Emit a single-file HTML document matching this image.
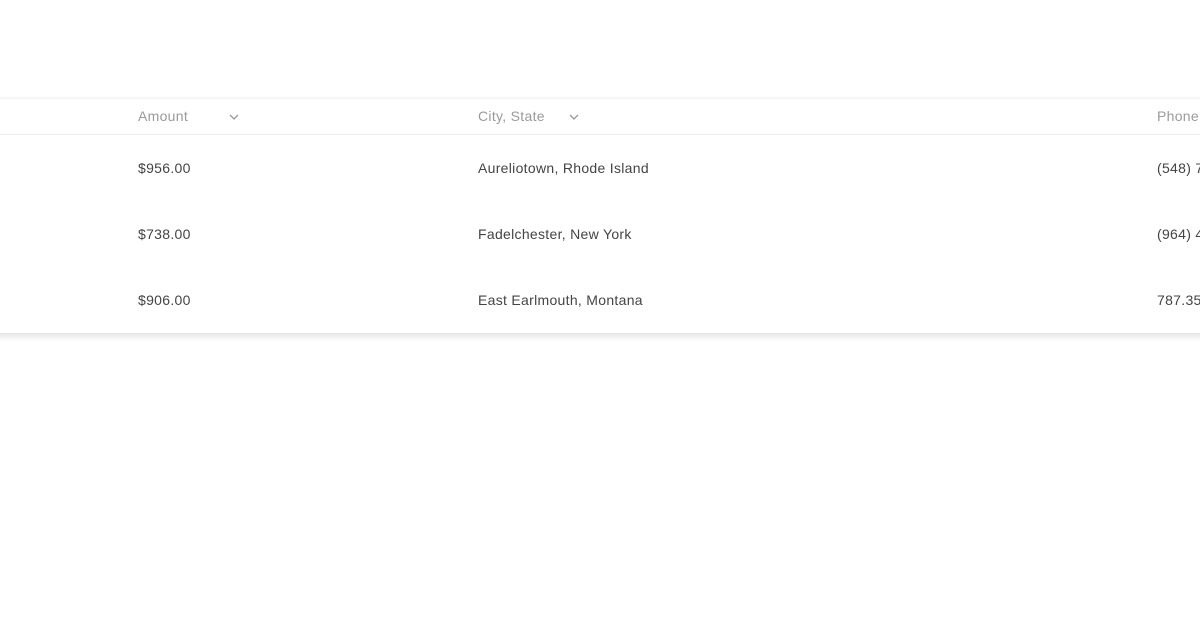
<!DOCTYPE html>
<html><head><style>
body{margin:0;width:1200px;height:630px;background:#fff;overflow:hidden;font-family:"Liberation Sans",sans-serif;position:relative}
.card{position:absolute;left:-10px;top:99px;width:1300px;height:234px;background:#fff;box-shadow:0 3px 7px rgba(0,0,0,.13),0 -1px 3px rgba(0,0,0,.04)}
.hdr{position:absolute;left:0;top:0;width:100%;height:35px;border-bottom:1px solid #ececec}
.t{position:absolute;font-size:14px;white-space:nowrap;line-height:16px;letter-spacing:0.3px}
.h{color:#9a9a9a;top:9px}
.b{color:#444}
svg{position:absolute}
</style></head><body>
<div class="card">
<div class="hdr">
<span class="t h" style="left:148px">Amount</span>
<svg style="left:238px;top:14px" width="12" height="8" viewBox="0 0 12 8"><path d="M2 2l4 4 4-4" fill="none" stroke="#999" stroke-width="1.3"/></svg>
<span class="t h" style="left:488px">City, State</span>
<svg style="left:578px;top:14px" width="12" height="8" viewBox="0 0 12 8"><path d="M2 2l4 4 4-4" fill="none" stroke="#999" stroke-width="1.3"/></svg>
<span class="t h" style="left:1167px">Phone</span>
</div>
<span class="t b" style="left:148px;top:61px">$956.00</span>
<span class="t b" style="left:488px;top:61px">Aureliotown, Rhode Island</span>
<span class="t b" style="left:1167px;top:61px">(548) 7</span>
<span class="t b" style="left:148px;top:127px">$738.00</span>
<span class="t b" style="left:488px;top:127px">Fadelchester, New York</span>
<span class="t b" style="left:1167px;top:127px">(964) 4</span>
<span class="t b" style="left:148px;top:193px">$906.00</span>
<span class="t b" style="left:488px;top:193px">East Earlmouth, Montana</span>
<span class="t b" style="left:1167px;top:193px">787.353</span>
</div>
</body></html>
